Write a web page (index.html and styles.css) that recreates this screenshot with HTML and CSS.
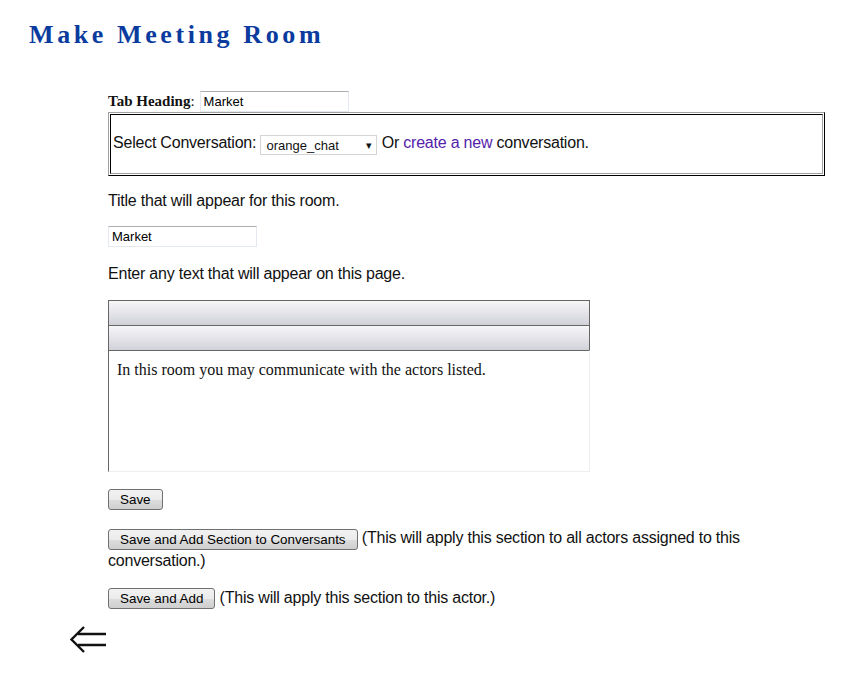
FILE: index.html
```html
<!DOCTYPE html>
<html>
<head>
<meta charset="utf-8">
<title>Make Meeting Room</title>
<link rel="stylesheet" href="styles.css">
</head>
<body>
<h1 class="page-title">Make Meeting Room</h1>
<div class="content">
  <div class="tab-row"><span class="tab-label">Tab Heading</span>: <input class="text-input tab-input" type="text" value="Market"></div>
  <table class="conv-table">
    <tr><td class="conv-cell">Select Conversation: <span class="select">orange_chat<span class="caret">&#9662;</span></span> Or <a class="link" href="#">create a new</a> conversation.</td></tr>
  </table>
  <p class="para">Title that will appear for this room.</p>
  <p class="para"><input class="text-input title-input" type="text" value="Market"></p>
  <p class="para">Enter any text that will appear on this page.</p>
  <div class="editor">
    <div class="toolbar"></div>
    <div class="toolbar"></div>
    <div class="editor-body">In this room you may communicate with the actors listed.</div>
  </div>
  <div class="actions">
    <p class="btn-para"><button class="btn">Save</button></p>
    <p class="btn-para btn-para-wide"><button class="btn">Save and Add Section to Conversants</button> (This will apply this section to all actors assigned to this conversation.)</p>
    <p class="btn-para"><button class="btn">Save and Add</button> (This will apply this section to this actor.)</p>
  </div>
</div>
<div class="back">
  <svg width="38" height="28" viewBox="0 0 38 28"><path d="M15 1 L2.5 13.5 L15 26" fill="none" stroke="#111" stroke-width="2.4"/><path d="M9 8 H37 M9 19 H37" fill="none" stroke="#111" stroke-width="2.4"/></svg>
</div>
</body>
</html>
```
FILE: styles.css
```css
body {
  margin: 8px;
  font-family: "Liberation Sans", Arial, sans-serif;
  font-size: 16px;
  color: #111;
  background: #fff;
}
.page-title {
  margin: 12px 0 0 21px;
  font-family: "Liberation Serif", "Times New Roman", serif;
  font-size: 26px;
  line-height: 30px;
  font-weight: bold;
  letter-spacing: 3.6px;
  color: #0b3b9e;
}
.content {
  margin-left: 100px;
  margin-top: 40px;
  width: 717px;
}
.tab-row {
  height: 22px;
  display: flex;
  align-items: center;
  font-family: "Liberation Serif", "Times New Roman", serif;
  font-size: 15px;
}
.tab-label { font-weight: bold; }
.text-input {
  box-sizing: border-box;
  height: 21px;
  border: 1px solid #e3e9ef;
  border-top-color: #abadb3;
  font-family: "Liberation Sans", Arial, sans-serif;
  font-size: 13px;
  padding: 0 3px;
  color: #000;
}
.tab-input { width: 149px; margin-left: 5px; }
.title-input { width: 149px; vertical-align: top; }
.conv-table {
  width: 717px;
  border-collapse: separate;
  border-spacing: 1px;
  border: 1px solid;
  border-color: #a0a0a0 #000 #000 #a0a0a0;
}
.conv-cell {
  height: 60px;
  box-sizing: border-box;
  padding: 0 2px;
  border: 1px solid;
  border-color: #000 #a0a0a0 #a0a0a0 #000;
  font-size: 16px;
  letter-spacing: -0.22px;
  vertical-align: middle;
}
.select {
  display: inline-flex;
  align-items: center;
  justify-content: space-between;
  box-sizing: border-box;
  width: 117px;
  height: 20px;
  padding: 0 4px 0 5px;
  border: 1px solid #d4d4d4;
  font-size: 13px;
  letter-spacing: 0;
  vertical-align: middle;
  position: relative;
  top: 1px;
}
.caret { font-size: 11px; }
.link { color: #5522aa; text-decoration: none; }
.para {
  margin: 16px 0;
  line-height: 18px;
  letter-spacing: -0.22px;
}
.para + .para + .para { margin-top: 18px; }
.editor {
  width: 482px;
  margin-top: 17px;
}
.toolbar {
  height: 24px;
  border: 1px solid #666;
  border-bottom: none;
  background: linear-gradient(#f7f7f9, #d1d1da);
}
.editor-body {
  height: 110px;
  padding: 10px 8px 0 8px;
  border-top: 1px solid #666;
  border-left: 1px solid #666;
  border-right: 1px solid #eee;
  border-bottom: 1px solid #eee;
  font-family: "Liberation Serif", "Times New Roman", serif;
  font-size: 16px;
  line-height: 18px;
}
.actions {
  display: flex;
  flex-direction: column;
  padding-top: 16px;
  gap: 16px;
  padding-bottom: 17px;
}
.btn-para {
  margin: 0;
  line-height: 22px;
  letter-spacing: -0.22px;
}
.btn-para-wide { margin-top: 1px; margin-bottom: -1px; }
.btn {
  height: 21px;
  padding: 0 11px;
  border: 1px solid #707070;
  border-radius: 3px;
  background: linear-gradient(#f2f2f2 0%, #ebebeb 50%, #dddddd 51%, #cfcfcf 100%);
  font-family: "Liberation Sans", Arial, sans-serif;
  font-size: 13.4px;
  letter-spacing: 0;
  color: #000;
  vertical-align: middle;
}
.back {
  margin: 0 0 0 61px;
  height: 28px;
}
```
